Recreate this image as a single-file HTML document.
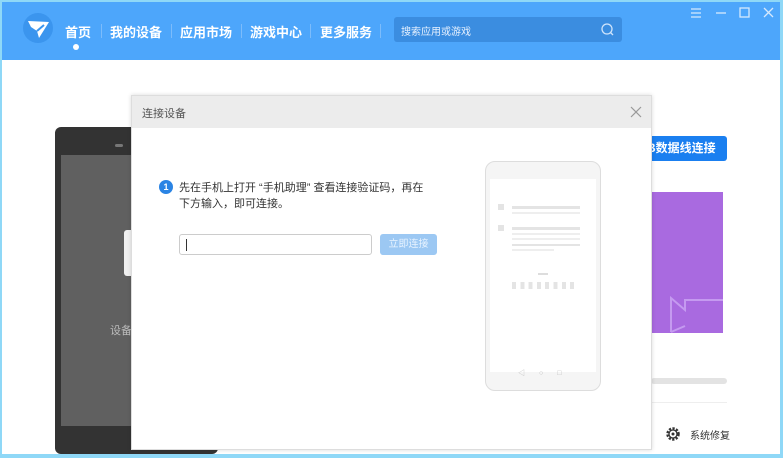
<!DOCTYPE html><html><head><meta charset="utf-8"><style>
*{margin:0;padding:0;box-sizing:border-box}
body{width:783px;height:458px;overflow:hidden;background:#8fd8f7;font-family:"Liberation Sans","Noto Sans CJK SC",sans-serif;position:relative}
.win{position:absolute;left:2px;top:2px;width:778px;height:452px;background:#fff;overflow:hidden}
.hdr{position:absolute;left:0;top:0;width:778px;height:58px;background:#4da6fb}
.nav{position:absolute;top:20px;color:#fff;font-size:13px;font-weight:bold;white-space:nowrap}
.sep{position:absolute;top:22px;width:1px;height:14px;background:#7cbcfb}
.abs{position:absolute}
</style></head><body><div class="win">
<div class="hdr">
<svg class="abs" style="left:20px;top:10px" width="32" height="32" viewBox="0 0 32 32"><circle cx="16" cy="16" r="15" fill="#3b95ee"/><path d="M6 9 L27 10 L17 26 L15 19 L9 15 Z" fill="#fff"/><path d="M15 19 L22 13" stroke="#3b95ee" stroke-width="2"/></svg>
<div class="nav" style="left:63px">首页</div>
<div class="abs" style="left:71px;top:42px;width:6px;height:6px;border-radius:50%;background:#fff"></div>
<div class="sep" style="left:99px"></div>
<div class="nav" style="left:108px">我的设备</div>
<div class="sep" style="left:169px"></div>
<div class="nav" style="left:178px">应用市场</div>
<div class="sep" style="left:239px"></div>
<div class="nav" style="left:248px">游戏中心</div>
<div class="sep" style="left:308px"></div>
<div class="nav" style="left:318px">更多服务</div>
<div class="sep" style="left:378px"></div>
<div class="abs" style="left:392px;top:15px;width:228px;height:25px;background:#3b8de0;border-radius:3px"><span class="abs" style="left:7px;top:6px;font-size:10px;color:#e6f1ff">搜索应用或游戏</span>
<svg class="abs" style="left:206px;top:5px" width="15" height="15"><circle cx="7" cy="7" r="5" fill="none" stroke="#cfe4fb" stroke-width="1.3"/><path d="M10.5 10.5L13 13" stroke="#cfe4fb" stroke-width="1.3"/></svg></div>
<svg class="abs" style="left:688px;top:4px" width="90" height="14" stroke="#d5e9fd" stroke-width="1.3" fill="none"><path d="M1 3h10M1 7h10M1 11h10"/><path d="M26 7h10"/><rect x="50" y="2" width="9" height="9"/><path d="M74 2l9 9M83 2l-9 9"/></svg>
</div>
<div class="abs" style="left:53px;top:125px;width:163px;height:327px;background:#333;border-radius:6px"></div>
<div class="abs" style="left:59px;top:153px;width:160px;height:271px;background:#606060"></div>
<div class="abs" style="left:113px;top:142px;width:8px;height:3px;background:#777;border-radius:2px"></div>
<div class="abs" style="left:122px;top:228px;width:10px;height:46px;background:#f0f0f0;border-radius:3px"></div>
<div class="abs" style="left:108px;top:320px;font-size:11px;color:#bbb">设备</div>
<div class="abs" style="left:630px;top:134px;width:95px;height:25px;background:#1a7ff0;border-radius:3px;color:#fff;font-size:12px;font-weight:bold;line-height:25px;padding-left:15px">B数据线连接</div>
<div class="abs" style="left:649px;top:190px;width:72px;height:141px;background:#a96ae0"></div>
<svg class="abs" style="left:665px;top:290px" width="56" height="42" fill="none" stroke="#c59af0" stroke-width="2"><path d="M4 40V6l14 12V8h40M4 40l14-6"/></svg>
<div class="abs" style="left:649px;top:376px;width:76px;height:6px;background:#e3e3e3;border-radius:3px"></div>
<div class="abs" style="left:649px;top:400px;width:76px;height:1px;background:#eee"></div>
<svg class="abs" style="left:663px;top:424px" width="16" height="16" viewBox="0 0 16 16"><circle cx="8" cy="8" r="5.5" fill="none" stroke="#333" stroke-width="2.5" stroke-dasharray="2.2 1.4"/><circle cx="8" cy="8" r="4" fill="none" stroke="#333" stroke-width="1.3"/><circle cx="8" cy="8" r="1.5" fill="#333"/></svg>
<div class="abs" style="left:688px;top:425px;font-size:10px;color:#333">系统修复</div>
<div class="abs" style="left:129px;top:93px;width:521px;height:355px;background:#fff;border:1px solid #ddd;box-shadow:0 0 4px rgba(0,0,0,.15)">
<div class="abs" style="left:0;top:0;width:519px;height:32px;background:#ececec"><span class="abs" style="left:10px;top:9px;font-size:11px;color:#555">连接设备</span>
<svg class="abs" style="left:498px;top:10px" width="12" height="12" stroke="#999" stroke-width="1.2"><path d="M1 1l10 10M11 1L1 11"/></svg></div>
<div class="abs" style="left:27px;top:84px;width:14px;height:14px;border-radius:50%;background:#2a84e4;color:#fff;font-size:9px;text-align:center;line-height:14px;font-weight:bold">1</div>
<div class="abs" style="left:47px;top:84px;width:250px;font-size:11px;line-height:16px;color:#333">先在手机上打开 “手机助理” 查看连接验证码，再在下方输入，即可连接。</div>
<div class="abs" style="left:47px;top:138px;width:193px;height:21px;border:1px solid #ccc;border-radius:3px"><div class="abs" style="left:6px;top:4px;width:1px;height:12px;background:#333"></div></div>
<div class="abs" style="left:248px;top:138px;width:57px;height:21px;background:#9cc8f3;border-radius:3px;color:#e8f3ff;font-size:10px;text-align:center;line-height:21px">立即连接</div>
<div class="abs" style="left:353px;top:65px;width:116px;height:230px;border:1px solid #ddd;border-radius:10px;background:#f5f5f5">
<div class="abs" style="left:4px;top:17px;width:106px;height:193px;background:#fff"></div>
<div class="abs" style="left:12px;top:42px;width:6px;height:6px;background:#e4e4e4"></div>
<div class="abs" style="left:26px;top:44px;width:68px;height:3px;background:#e4e4e4"></div>
<div class="abs" style="left:26px;top:50px;width:68px;height:2px;background:#eee"></div>
<div class="abs" style="left:12px;top:63px;width:6px;height:6px;background:#e4e4e4"></div>
<div class="abs" style="left:26px;top:65px;width:68px;height:3px;background:#e4e4e4"></div>
<div class="abs" style="left:26px;top:71px;width:68px;height:2px;background:#eee"></div>
<div class="abs" style="left:26px;top:76px;width:68px;height:2px;background:#eee"></div>
<div class="abs" style="left:26px;top:82px;width:68px;height:2px;background:#e4e4e4"></div>
<div class="abs" style="left:26px;top:87px;width:42px;height:2px;background:#eee"></div>
<div class="abs" style="left:52px;top:111px;width:10px;height:2px;background:#ddd"></div>
<div class="abs" style="left:26px;top:120px;width:64px;height:7px;background:repeating-linear-gradient(90deg,#e4e4e4 0 4px,transparent 4px 8.3px)"></div>
<div class="abs" style="left:32px;top:206px;font-size:7px;color:#bbb;letter-spacing:14px">◁○□</div>
</div>
</div>
</div></body></html>
